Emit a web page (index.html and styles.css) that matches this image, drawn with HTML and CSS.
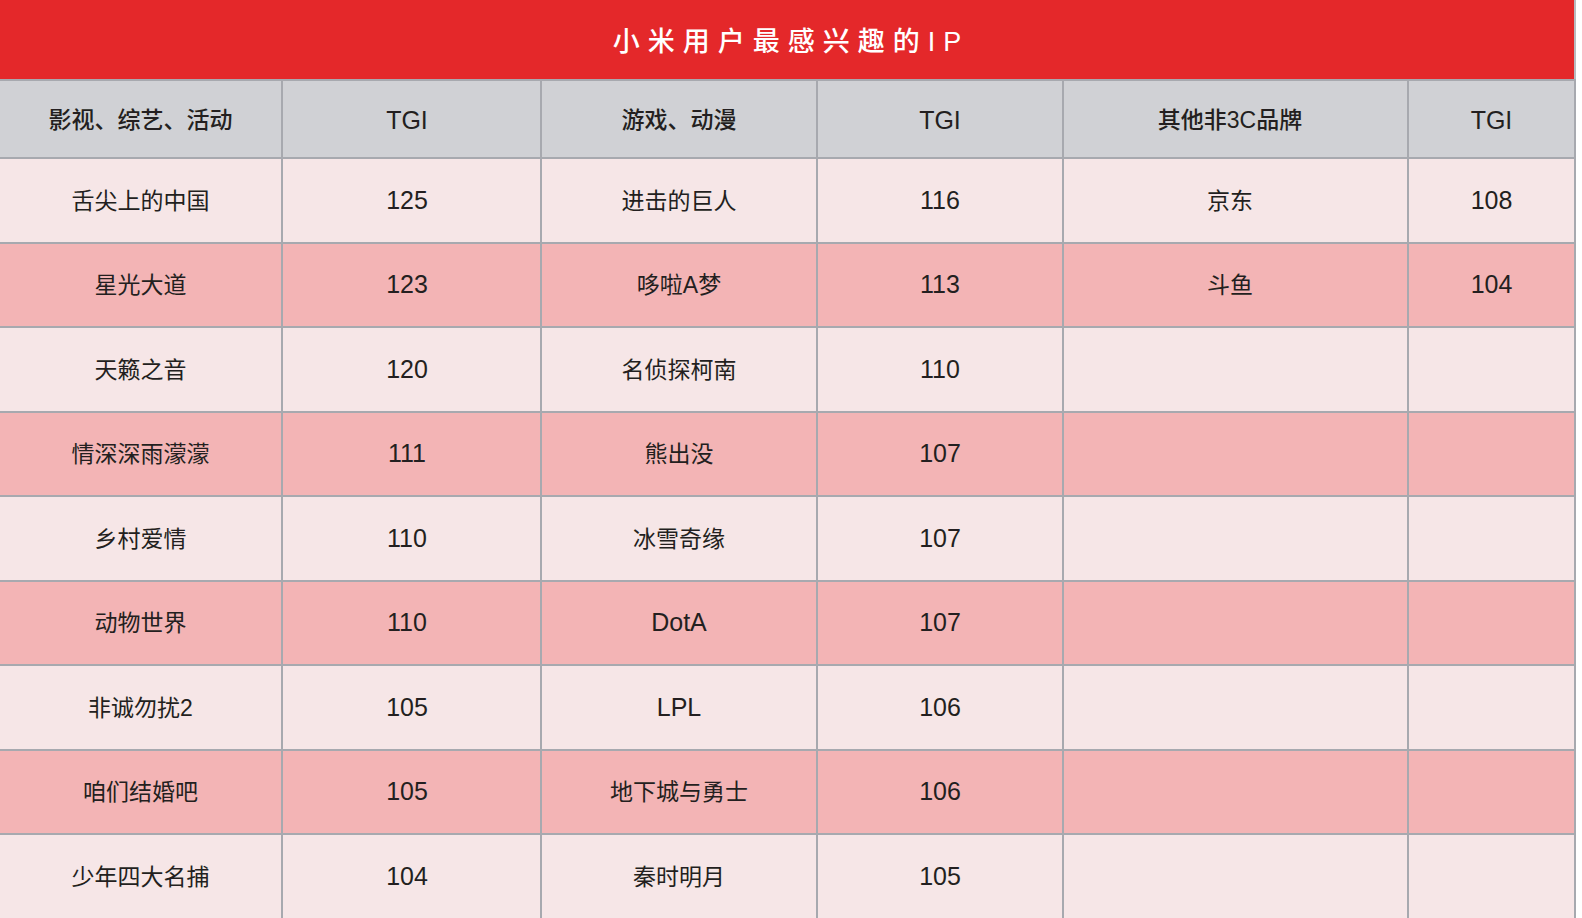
FILE: index.html
```html
<!DOCTYPE html>
<html lang="zh-CN">
<head>
<meta charset="utf-8">
<title>小米用户最感兴趣的IP</title>
<link rel="stylesheet" href="styles.css">
</head>
<body>
<div class="sheet">
  <div class="title">小米用户最感兴趣的IP</div>
  <div class="grid">
    <div class="cell head">影视、综艺、活动</div>
    <div class="cell head num c2">TGI</div>
    <div class="cell head">游戏、动漫</div>
    <div class="cell head num">TGI</div>
    <div class="cell head c5">其他非3C品牌</div>
    <div class="cell head num">TGI</div>

    <div class="cell light">舌尖上的中国</div><div class="cell light num c2">125</div><div class="cell light">进击的巨人</div><div class="cell light num">116</div><div class="cell light c5">京东</div><div class="cell light num">108</div>
    <div class="cell pink">星光大道</div><div class="cell pink num c2">123</div><div class="cell pink">哆啦A梦</div><div class="cell pink num">113</div><div class="cell pink c5">斗鱼</div><div class="cell pink num">104</div>
    <div class="cell light">天籁之音</div><div class="cell light num c2">120</div><div class="cell light">名侦探柯南</div><div class="cell light num">110</div><div class="cell light c5"></div><div class="cell light num"></div>
    <div class="cell pink">情深深雨濛濛</div><div class="cell pink num c2">111</div><div class="cell pink">熊出没</div><div class="cell pink num">107</div><div class="cell pink c5"></div><div class="cell pink num"></div>
    <div class="cell light">乡村爱情</div><div class="cell light num c2">110</div><div class="cell light">冰雪奇缘</div><div class="cell light num">107</div><div class="cell light c5"></div><div class="cell light num"></div>
    <div class="cell pink">动物世界</div><div class="cell pink num c2">110</div><div class="cell pink num">DotA</div><div class="cell pink num">107</div><div class="cell pink c5"></div><div class="cell pink num"></div>
    <div class="cell light">非诚勿扰2</div><div class="cell light num c2">105</div><div class="cell light num">LPL</div><div class="cell light num">106</div><div class="cell light c5"></div><div class="cell light num"></div>
    <div class="cell pink">咱们结婚吧</div><div class="cell pink num c2">105</div><div class="cell pink">地下城与勇士</div><div class="cell pink num">106</div><div class="cell pink c5"></div><div class="cell pink num"></div>
    <div class="cell light">少年四大名捕</div><div class="cell light num c2">104</div><div class="cell light">秦时明月</div><div class="cell light num">105</div><div class="cell light c5"></div><div class="cell light num"></div>
  </div>
</div>
</body>
</html>
```
FILE: styles.css
```css
html, body {
  margin: 0;
  padding: 0;
  background: #ffffff;
}
body {
  font-family: "Liberation Sans", "Noto Sans CJK SC", sans-serif;
  color: #231f20;
  height: 918px;
  overflow: hidden;
}
.sheet {
  width: 1576px;
  background: #a7a9af;
}
.title {
  width: 1574px;
  height: 79px;
  background: #e4282a;
  color: #ffffff;
  font-size: 27px;
  font-weight: 500;
  letter-spacing: 8px;
  text-indent: 8px;
  display: flex;
  align-items: center;
  justify-content: center;
  border-right: 2px solid #b8babf;
  box-sizing: content-box;
}
.grid {
  display: grid;
  grid-template-columns: 281px 257px 274px 244px 343px 165px;
  grid-template-rows: 76px repeat(9, 82.5px);
  column-gap: 2px;
  row-gap: 2px;
  padding-top: 2px;
  padding-right: 2px;
}
.cell {
  display: flex;
  align-items: center;
  justify-content: center;
  font-size: 23px;
  box-sizing: border-box;
  padding-bottom: 3px;
}
.num {
  font-size: 25px;
  padding-bottom: 0;
}
.c2 {
  padding-right: 9px;
}
.c5 {
  padding-right: 11px;
}
.head {
  background: #d0d1d5;
  font-weight: 500;
}
.head.num {
  padding-top: 3px;
}
.light {
  background: #f6e6e7;
}
.pink {
  background: #f3b4b5;
}
```
